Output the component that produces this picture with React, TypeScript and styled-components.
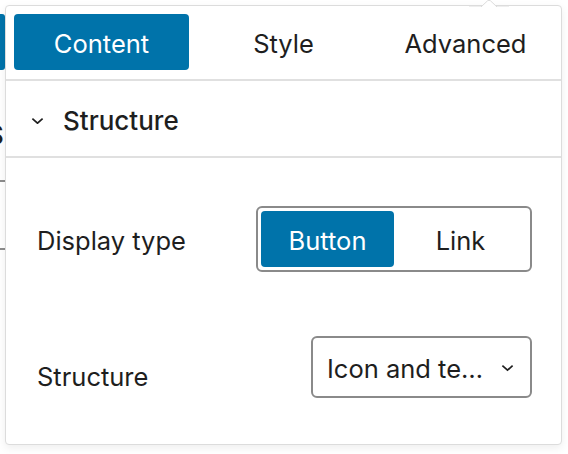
import React from 'react';
import styled, { createGlobalStyle } from 'styled-components';

const GlobalStyle = createGlobalStyle`
  html, body {
    margin: 0;
    padding: 0;
    background: #ffffff;
  }
  body {
    font-family: Inter, "Noto Sans", "Liberation Sans", sans-serif;
    color: #1e1e1e;
    -webkit-font-smoothing: antialiased;
  }
  * {
    box-sizing: border-box;
  }
`;

const Page = styled.div`
  position: relative;
  width: 568px;
  height: 454px;
  overflow: hidden;
  background: #ffffff;
`;

// the editor page that sits behind the popover, only its left edge shows
const BackPage = styled.div`
  display: flex;
  flex-direction: column;
  width: 5px;
  padding-top: 14px;
`;

const BackButton = styled.div`
  height: 56px;
  background: #0073aa;
  border-radius: 0 3px 3px 0;
`;

const BackGlyph = styled.div`
  margin-top: 50px;
  margin-left: -13px;
  font-size: 26px;
  line-height: 30px;
  font-weight: 500;
  color: #1e1e1e;
`;

const BackLine = styled.div<{ $gap: number }>`
  margin-top: ${p => p.$gap}px;
  height: 2px;
  background: #8c8c8c;
`;

const Popover = styled.div`
  position: absolute;
  left: 5px;
  top: 5px;
  width: 557px;
  height: 440px;
  background: #ffffff;
  border: 1px solid #dcdcdc;
  border-radius: 4px;
  box-shadow: 0 3px 8px rgba(0, 0, 0, 0.07);
  display: flex;
  flex-direction: column;
`;

const Arrow = styled.svg`
  position: absolute;
  top: -6px;
  left: 463px;
`;

const TabBar = styled.div`
  display: grid;
  grid-template-columns: repeat(3, 1fr);
  gap: 7px;
  padding: 8px 8px 9px;
  border-bottom: 2px solid #e0e0e0;
`;

const Tab = styled.button<{ $active?: boolean }>`
  height: 56px;
  padding: 2px 0 0;
  border: none;
  border-radius: 4px;
  background: ${p => (p.$active ? '#0073aa' : 'transparent')};
  color: ${p => (p.$active ? '#ffffff' : '#1e1e1e')};
  font-family: inherit;
  font-size: 25.5px;
  font-weight: 400;
  cursor: pointer;
`;

const PanelHeader = styled.button`
  display: flex;
  align-items: center;
  gap: 19px;
  height: 77px;
  padding: 4px 0 0 25px;
  border: none;
  border-bottom: 2px solid #e0e0e0;
  background: transparent;
  font-family: inherit;
  font-size: 26px;
  font-weight: 500;
  color: #1e1e1e;
  text-align: left;
`;

const PanelBody = styled.div`
  display: flex;
  flex-direction: column;
  gap: 64px;
  padding: 48px 29px 0 31px;
`;

const Row = styled.div`
  display: flex;
  align-items: center;
  justify-content: space-between;
`;

const Label = styled.span<{ $drop?: number }>`
  font-size: 25.5px;
  color: #1e1e1e;
  margin-top: ${p => (p.$drop ? `${p.$drop}px` : '2px')};
`;

const Segmented = styled.div`
  display: grid;
  grid-template-columns: 1fr 1fr;
  width: 276px;
  height: 66px;
  padding: 3px;
  border: 2px solid #8a8a8a;
  border-radius: 6px;
`;

const Segment = styled.button<{ $active?: boolean }>`
  padding: 2px 0 0;
  border: none;
  border-radius: 4px;
  background: ${p => (p.$active ? '#0073aa' : 'transparent')};
  color: ${p => (p.$active ? '#ffffff' : '#1e1e1e')};
  font-family: inherit;
  font-size: 25.5px;
`;

const Select = styled.div`
  display: flex;
  align-items: center;
  justify-content: space-between;
  width: 221px;
  height: 62px;
  padding: 2px 16px 0 14px;
  border: 2px solid #8a8a8a;
  border-radius: 6px;
  font-size: 25.5px;
  color: #1e1e1e;
  white-space: nowrap;
`;

const Chevron = ({ size = 14 }: { size?: number }) => (
  <svg width={size} height={size * 0.6} viewBox="0 0 14 8" fill="none">
    <path d="M1.5 1.5 L7 6.5 L12.5 1.5" stroke="#1e1e1e" strokeWidth="1.8" />
  </svg>
);

const App = () => (
  <>
    <GlobalStyle />
    <Page>
      <BackPage>
        <BackButton />
        <BackGlyph>S</BackGlyph>
        <BackLine $gap={30} />
        <BackLine $gap={66} />
      </BackPage>

      <Popover>
        <Arrow width="40" height="7" viewBox="0 0 40 7">
          <path d="M0 7 L12 7 L18.5 0.8 Q20 -0.2 21.5 0.8 L28 7 L40 7" fill="#ffffff" stroke="#dcdcdc" strokeWidth="1" />
        </Arrow>

        <TabBar>
          <Tab $active>Content</Tab>
          <Tab>Style</Tab>
          <Tab>Advanced</Tab>
        </TabBar>

        <PanelHeader>
          <Chevron size={13} />
          Structure
        </PanelHeader>

        <PanelBody>
          <Row>
            <Label>Display type</Label>
            <Segmented>
              <Segment $active>Button</Segment>
              <Segment>Link</Segment>
            </Segmented>
          </Row>
          <Row>
            <Label $drop={18}>Structure</Label>
            <Select>
              <span>Icon and te…</span>
              <Chevron size={13} />
            </Select>
          </Row>
        </PanelBody>
      </Popover>
    </Page>
  </>
);

export default App;
